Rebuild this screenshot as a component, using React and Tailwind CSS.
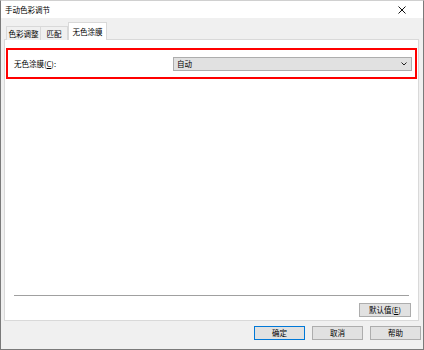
import React from 'react';

const font = { fontFamily: '"Noto Sans CJK SC", "Noto Sans", sans-serif' };

const Btn = ({ children, primary, className = '' }) => (
  <button
    type="button"
    className={`h-[14px] flex items-center justify-center bg-[#e1e1e1] text-[7.5px] leading-none text-black ${
      primary ? 'border border-[#0078d7]' : 'border border-[#adadad]'
    } ${className}`}
  >
    {children}
  </button>
);

export default function App() {
  return (
    <div
      style={font}
      className="w-[424px] h-[350px] flex flex-col bg-[#f0f0f0] border border-t-[#d0d0d0] border-[#7a7a7a] text-[7.5px] leading-none text-black select-none"
    >
      {/* title bar */}
      <div className="h-[17px] bg-white flex items-center justify-between pl-[4px] pr-[17px]">
        <span className="pt-[1px]">手动色彩调节</span>
        <svg width="8" height="8" viewBox="0 0 8 8">
          <path d="M0.5 0.5 L7.5 7.5 M7.5 0.5 L0.5 7.5" stroke="#111" strokeWidth="1" />
        </svg>
      </div>

      {/* tabs */}
      <div className="flex items-end h-[21px] pl-[5px] relative z-10">
        <div className="h-[14px] w-[35px] flex items-center justify-center bg-[#f0f0f0] border border-b-0 border-[#d9d9d9] -mb-px">
          色彩调整
        </div>
        <div className="h-[14px] w-[27px] flex items-center justify-center bg-[#f0f0f0] border border-l-0 border-b-0 border-[#d9d9d9] -mb-px">
          匹配
        </div>
        <div className="h-[18px] w-[39px] flex items-center justify-center bg-white border border-b-0 border-[#d9d9d9] -mb-px">
          无色涂膜
        </div>
      </div>

      {/* panel */}
      <div className="ml-[3px] mr-[4px] h-[282px] bg-white border border-[#d9d9d9] flex flex-col pl-[1px] pr-[1px] pt-[8px] pb-[3px]">
        <div className="h-[31px] border-2 border-[#ff0000] flex items-center pl-[6px] pr-[3px]">
          <span className="flex-1">
            无色涂膜(<span className="underline">C</span>):
          </span>
          <div className="w-[239px] h-[14px] bg-[#e1e1e1] border border-[#adadad] flex items-center justify-between pl-[3px] pr-[4px]">
            <span>自动</span>
            <svg width="6" height="4" viewBox="0 0 6 4">
              <path d="M0.5 0.5 L3 3 L5.5 0.5" fill="none" stroke="#222" strokeWidth="1" />
            </svg>
          </div>
        </div>
        <div className="flex-1" />
        <div className="mx-[8px] h-0 border-t border-[#a0a0a0] border-b border-b-white" />
        <div className="flex justify-end pr-[6px] pt-[6px]">
          <Btn className="w-[52px]">
            默认值(<span className="underline">E</span>)
          </Btn>
        </div>
      </div>

      {/* bottom buttons */}
      <div className="flex justify-end gap-[7px] pt-[5px] pr-[2px]">
        <Btn primary className="w-[51px]">确定</Btn>
        <Btn className="w-[51px]">取消</Btn>
        <Btn className="w-[51px]">帮助</Btn>
      </div>
    </div>
  );
}
